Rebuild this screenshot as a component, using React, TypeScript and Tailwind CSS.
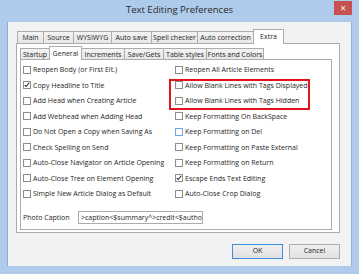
import React from "react";

const font = { fontFamily: '"Open Sans", "Noto Sans", "Liberation Sans", sans-serif' };

function Box({ checked, hot }: { checked?: boolean; hot?: boolean }) {
  return (
    <span
      className={
        "relative shrink-0 w-[8px] h-[8px] border bg-white " +
        (hot ? "border-[#6aa8e6]" : "border-[#8c8c8c]")
      }
    >
      {checked && (
        <svg viewBox="0 0 8 8" className="absolute left-0 top-0 w-[6px] h-[6px]">
          <path d="M1 4 L3 6 L7 1" stroke="#222" strokeWidth="1.4" fill="none" />
        </svg>
      )}
    </span>
  );
}

function Row({ label, checked, hot }: { label: string; checked?: boolean; hot?: boolean }) {
  return (
    <div className="h-[15.5px] flex items-center gap-[2px]">
      <Box checked={checked} hot={hot} />
      <span className="text-[7px] text-[#1e1e1e] whitespace-nowrap leading-none">{label}</span>
    </div>
  );
}

function Tab({ label, w, sel }: { label: string; w: number; sel?: boolean }) {
  return (
    <div
      style={{ width: w }}
      className={
        "flex items-center justify-center text-[7px] text-[#1e1e1e] whitespace-nowrap border-t border-l border-r border-[#acacac] -mr-px leading-none " +
        (sel
          ? "h-[15px] bg-white relative z-10 -mb-px pb-[2px]"
          : "h-[12px] bg-gradient-to-b from-[#f3f3f3] to-[#e6e6e6]")
      }
    >
      {label}
    </div>
  );
}

function Tab2({ label, w, sel }: { label: string; w: number; sel?: boolean }) {
  return (
    <div
      style={{ width: w }}
      className={
        "flex items-center justify-center text-[7px] text-[#1e1e1e] whitespace-nowrap border-t border-l border-r border-[#acacac] -mr-px leading-none " +
        (sel
          ? "h-[14px] bg-white relative z-10 -mb-px pb-[1px]"
          : "h-[11px] bg-gradient-to-b from-[#f3f3f3] to-[#e6e6e6]")
      }
    >
      {label}
    </div>
  );
}

export default function App() {
  const left: [string, boolean?][] = [
    ["Reopen Body (or First Elt.)"],
    ["Copy Headline to Title", true],
    ["Add Head when Creating Article"],
    ["Add Webhead when Adding Head"],
    ["Do Not Open a Copy when Saving As"],
    ["Check Spelling on Send"],
    ["Auto-Close Navigator on Article Opening"],
    ["Auto-Close Tree on Element Opening"],
    ["Simple New Article Dialog as Default"],
  ];
  const right: [string, boolean?, boolean?][] = [
    ["Reopen All Article Elements"],
    ["Allow Blank Lines with Tags Displayed"],
    ["Allow Blank Lines with Tags Hidden"],
    ["Keep Formatting On BackSpace"],
    ["Keep Formatting on Del", false, true],
    ["Keep Formatting on Paste External"],
    ["Keep Formatting on Return"],
    ["Escape Ends Text Editing", true],
    ["Auto-Close Crop Dialog"],
  ];
  return (
    <div style={font} className="w-[359px] h-[274px] bg-[#aecbeb] flex flex-col overflow-hidden">
      {/* title bar */}
      <div className="h-[22px] flex items-start relative shrink-0">
        <div className="flex-1 h-full flex items-center justify-center text-[9.5px] text-[#2a2a2a] pb-[1px]">
          Text Editing Preferences
        </div>
        <div className="absolute right-[7px] top-[1px] w-[18px] h-[14px] bg-[#c75050] flex items-center justify-center text-white text-[10px] leading-none">
          ×
        </div>
      </div>
      {/* body */}
      <div className="mx-[7px] h-[244px] bg-[#f2f2f2] border-l border-r border-[#8fb0d6] flex flex-col pl-[8px] pr-[11px] pt-[6px]">
        {/* outer tabs */}
        <div className="flex items-end h-[15px] pl-[1px]">
          <Tab label="Main" w={27} />
          <Tab label="Source" w={31} />
          <Tab label="WYSIWYG" w={39} />
          <Tab label="Auto save" w={41} />
          <Tab label="Spell checker" w={47} />
          <Tab label="Auto correction" w={57} />
          <Tab label="Extra" w={31} sel />
        </div>
        <div className="h-[190px] bg-white border border-[#acacac] flex flex-col pl-[3px] pr-[7px] pt-[1px]">
          <div className="flex items-end h-[14px] pl-[0px]">
            <Tab2 label="Startup" w={30} />
            <Tab2 label="General" w={33} sel />
            <Tab2 label="Increments" w={44} />
            <Tab2 label="Save/Gets" w={40} />
            <Tab2 label="Table styles" w={44} />
            <Tab2 label="Fonts and Colors" w={58} />
          </div>
          <div className="h-[171px] bg-white border border-[#acacac] flex flex-col pl-[2px] pt-[2px]">
            <div className="flex">
              <div className="w-[152px] flex flex-col">
                {left.map(([l, c]) => (
                  <Row key={l} label={l} checked={c} />
                ))}
              </div>
              <div className="flex flex-col relative">
                <div className="absolute left-[-6px] top-[17px] w-[141px] h-[31px] border-2 border-[#e0141c]" />
                {right.map(([l, c, h]) => (
                  <Row key={l} label={l} checked={c} hot={h} />
                ))}
              </div>
            </div>
            <div className="flex items-center mt-[9px] h-[13px]">
              <span className="text-[7px] text-[#1e1e1e] w-[55px] leading-none">Photo Caption</span>
              <div className="w-[125px] h-[13px] border border-[#acacac] bg-white overflow-hidden flex items-center px-[2px]">
                <span className="text-[7px] text-[#1e1e1e] whitespace-nowrap leading-none">
                  &gt;caption&lt;$summary^&gt;credit&lt;$author
                </span>
              </div>
            </div>
          </div>
        </div>
        {/* buttons */}
        <div className="flex justify-end gap-[6px] mt-[11px] pr-[0px]">
          <div className="w-[51px] h-[15px] border border-[#3c8fdc] bg-gradient-to-b from-[#f0f0f0] to-[#e1e1e1] flex items-center justify-center text-[7px] text-[#1e1e1e]">
            OK
          </div>
          <div className="w-[51px] h-[15px] border border-[#adadad] bg-gradient-to-b from-[#f0f0f0] to-[#e1e1e1] flex items-center justify-center text-[7px] text-[#1e1e1e]">
            Cancel
          </div>
        </div>
      </div>
    </div>
  );
}
